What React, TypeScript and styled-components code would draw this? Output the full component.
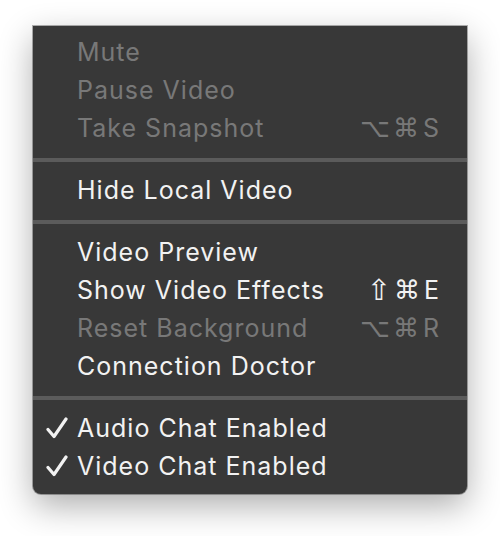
import React from "react";
import styled, { createGlobalStyle } from "styled-components";

const Global = createGlobalStyle`
    html, body {
        margin: 0;
        padding: 0;
        background: #ffffff;
    }
    body {
        font-family: Inter, "Noto Sans", "Liberation Sans", sans-serif;
        -webkit-font-smoothing: antialiased;
    }
`

const Page = styled.div`
    padding: 26px 0 0 33px;
    height: 536px;
    box-sizing: border-box;
`

const Menu = styled.div`
    width: 434px;
    box-sizing: border-box;
    background: #383838;
    border-radius: 0 0 8px 8px;
    padding: 7px 0 9px 0;
    box-shadow: 0 0 0 1px rgba(0, 0, 0, 0.3), 0 12px 34px rgba(0, 0, 0, 0.32);
`

const Row = styled.div<{ $disabled?: boolean }>`
    display: flex;
    align-items: center;
    height: 38px;
    padding-right: 28px;
    font-size: 25px;
    letter-spacing: 1px;
    color: ${p => (p.$disabled ? "#787878" : "#f2f2f2")};
`

const CheckSlot = styled.div`
    width: 44px;
    flex: none;
    display: flex;
    align-items: center;
    padding-left: 13px;
    box-sizing: border-box;
`

const Label = styled.div`
    flex: 1;
`

const Shortcut = styled.div`
    display: flex;
    align-items: center;
    gap: 3px;
    letter-spacing: 0;
`

const Glyph = styled.span<{ $big?: boolean }>`
    font-family: "DejaVu Sans", sans-serif;
    font-size: ${p => (p.$big ? "29px" : "26px")};
    line-height: 1;
`

const Letter = styled.span`
    margin-left: 1px;
`

const Separator = styled.div`
    height: 4px;
    margin: 11px 0 9px 0;
    background: #5b5b5b;
`

const Check = () => (
    <svg width="22" height="22" viewBox="0 0 22 22">
        <path d="M2 12.5 L8 19.5 L20 2" fill="none" stroke="#f2f2f2" strokeWidth="3.2" strokeLinecap="round" strokeLinejoin="round" />
    </svg>
)

type Item = {
    label: string
    disabled?: boolean
    checked?: boolean
    keys?: string[]
    letter?: string
}

const groups: Item[][] = [
    [
        { label: "Mute", disabled: true },
        { label: "Pause Video", disabled: true },
        { label: "Take Snapshot", disabled: true, keys: ["⌥", "⌘"], letter: "S" },
    ],
    [{ label: "Hide Local Video" }],
    [
        { label: "Video Preview" },
        { label: "Show Video Effects", keys: ["⇧", "⌘"], letter: "E" },
        { label: "Reset Background", disabled: true, keys: ["⌥", "⌘"], letter: "R" },
        { label: "Connection Doctor" },
    ],
    [
        { label: "Audio Chat Enabled", checked: true },
        { label: "Video Chat Enabled", checked: true },
    ],
]

const App: React.FC = () => {
    return (
        <Page>
            <Global />
            <Menu>
                {groups.map((group, gi) => (
                    <React.Fragment key={gi}>
                        {gi > 0 && <Separator />}
                        {group.map(item => (
                            <Row key={item.label} $disabled={item.disabled}>
                                <CheckSlot>{item.checked && <Check />}</CheckSlot>
                                <Label>{item.label}</Label>
                                {item.keys && (
                                    <Shortcut>
                                        {item.keys.map(k => (
                                            <Glyph key={k} $big={k === "⇧"}>{k}</Glyph>
                                        ))}
                                        <Letter>{item.letter}</Letter>
                                    </Shortcut>
                                )}
                            </Row>
                        ))}
                    </React.Fragment>
                ))}
            </Menu>
        </Page>
    )
}

export default App
